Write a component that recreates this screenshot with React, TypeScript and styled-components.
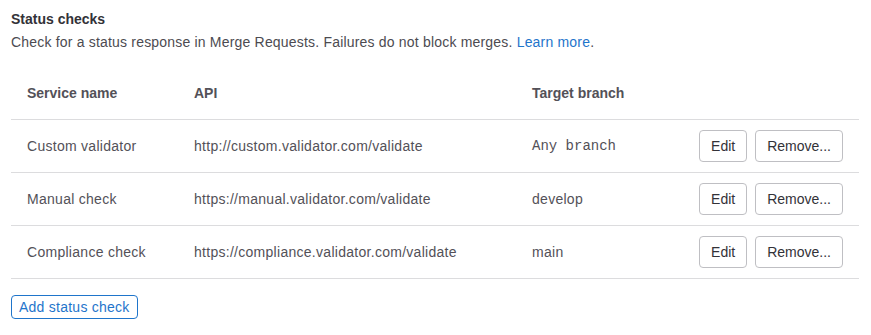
import React from "react";
import styled, { createGlobalStyle } from "styled-components";

interface StatusCheck {
  name: string;
  api: string;
  branch: string;
  anyBranch?: boolean;
}

const checks: StatusCheck[] = [
  {
    name: "Custom validator",
    api: "http://custom.validator.com/validate",
    branch: "Any branch",
    anyBranch: true,
  },
  {
    name: "Manual check",
    api: "https://manual.validator.com/validate",
    branch: "develop",
  },
  {
    name: "Compliance check",
    api: "https://compliance.validator.com/validate",
    branch: "main",
  },
];

const App: React.FC = () => {
  return (
    <>
      <GlobalStyle />
      <Section>
        <Title>Status checks</Title>
        <Description>
          Check for a status response in Merge Requests. Failures do not block
          merges. <Link href="#">Learn more</Link>.
        </Description>

        <Table>
          <HeaderRow>
            <HeaderCell>Service name</HeaderCell>
            <HeaderCell>API</HeaderCell>
            <HeaderCell>Target branch</HeaderCell>
            <HeaderCell />
          </HeaderRow>
          {checks.map((check) => (
            <Row key={check.name}>
              <Cell>{check.name}</Cell>
              <Cell>{check.api}</Cell>
              <Cell mono={check.anyBranch}>{check.branch}</Cell>
              <Actions>
                <Button>Edit</Button>
                <Button>Remove...</Button>
              </Actions>
            </Row>
          ))}
        </Table>

        <AddButton>Add status check</AddButton>
      </Section>
    </>
  );
};

export default App;

const GlobalStyle = createGlobalStyle`
  body {
    margin: 0;
    background: #fff;
    font-family: "Liberation Sans", Arial, sans-serif;
    font-size: 14px;
    color: #333238;
  }
`;

const Section = styled.section`
  padding: 9px 12px 0 11px;
`;

const Title = styled.h2`
  margin: 0;
  font-size: 14px;
  line-height: 20px;
  font-weight: 700;
  color: #333238;
`;

const Description = styled.p`
  margin: 3px 0 0;
  font-size: 14px;
  line-height: 20px;
  letter-spacing: 0.19px;
  color: #4c4b51;
`;

const Link = styled.a`
  color: #1f75cb;
  text-decoration: none;
`;

const Table = styled.div`
  margin-top: 14px;
  display: flex;
  flex-direction: column;
`;

const gridColumns = "167px 338px 167px 1fr";

const HeaderRow = styled.div`
  display: grid;
  grid-template-columns: ${gridColumns};
  height: 53px;
  align-items: center;
  border-bottom: 1px solid #dcdcde;
`;

const HeaderCell = styled.div`
  padding: 0 16px;
  font-weight: 700;
  color: #535158;
  line-height: 20px;
`;

const Row = styled.div`
  display: grid;
  grid-template-columns: ${gridColumns};
  height: 53px;
  box-sizing: border-box;
  align-items: center;
  border-bottom: 1px solid #dcdcde;
`;

const Cell = styled.div<{ mono?: boolean }>`
  padding: 0 16px;
  line-height: 20px;
  color: #535158;
  white-space: nowrap;
  letter-spacing: ${(props) => (props.mono ? "0" : "0.28px")};
  font-family: ${(props) =>
    props.mono
      ? '"Liberation Mono", "DejaVu Sans Mono", monospace'
      : '"Liberation Sans", Arial, sans-serif'};
`;

const Actions = styled.div`
  display: flex;
  justify-content: flex-end;
  gap: 8px;
  padding-right: 16px;
`;

const Button = styled.button`
  height: 32px;
  padding: 0 11px;
  font-family: "Liberation Sans", Arial, sans-serif;
  font-size: 14px;
  color: #333238;
  background: #fff;
  border: 1px solid #bfbfc3;
  border-radius: 4px;
  cursor: pointer;
`;

const AddButton = styled.button`
  margin-top: 16px;
  height: 24px;
  padding: 0 7px;
  font-family: "Liberation Sans", Arial, sans-serif;
  font-size: 14px;
  letter-spacing: 0.25px;
  color: #1f75cb;
  background: #fff;
  border: 1px solid #1f75cb;
  border-radius: 4px;
  cursor: pointer;
`;
